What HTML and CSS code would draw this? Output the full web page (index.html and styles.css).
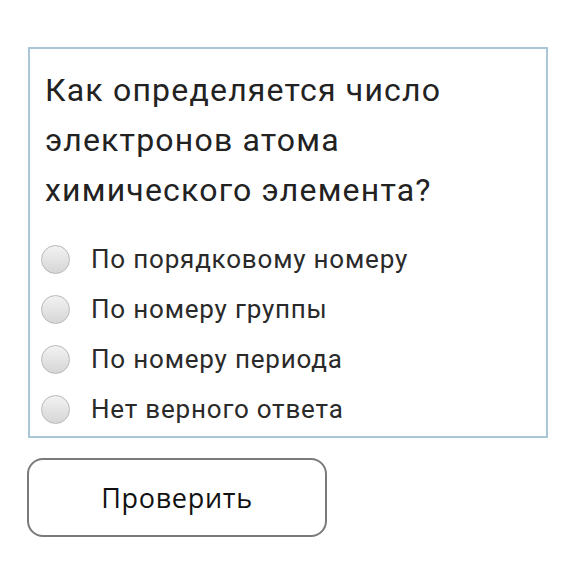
FILE: index.html
```html
<!DOCTYPE html>
<html>
<head>
  <meta charset="utf-8">
  <title>Тест</title>
  <link rel="stylesheet" href="styles.css">
</head>
<body>
  <div class="quiz">
    <div class="question">Как определяется число<br>электронов атома<br>химического элемента?</div>
    <label class="option"><span class="radio"></span>По порядковому номеру</label>
    <label class="option"><span class="radio"></span>По номеру группы</label>
    <label class="option"><span class="radio"></span>По номеру периода</label>
    <label class="option"><span class="radio"></span>Нет верного ответа</label>
  </div>
  <button class="check-btn">Проверить</button>
</body>
</html>
```

FILE: styles.css
```css
body {
  margin: 0;
  padding: 47px 0 0 28px;
  background: #fff;
  font-family: Roboto, "Liberation Sans", sans-serif;
  color: #222;
}

.quiz {
  width: 520px;
  box-sizing: border-box;
  border: 2px solid #a9c7d7;
  padding: 16px 15px 2px 11px;
}

.question {
  font-size: 32px;
  letter-spacing: 1.2px;
  line-height: 50px;
  padding-left: 4px;
  margin-bottom: 19px;
}

.option {
  display: flex;
  align-items: center;
  height: 50px;
  font-size: 26px;
  letter-spacing: 0.8px;
  color: #2a2a2a;
}

.radio {
  width: 29px;
  height: 29px;
  border-radius: 50%;
  box-sizing: border-box;
  border: 1px solid #b8b8b8;
  background: linear-gradient(#f2f2f2, #d6d6d6);
  margin-right: 21px;
  flex-shrink: 0;
}

.check-btn {
  display: block;
  margin-top: 20px;
  margin-left: -1px;
  width: 300px;
  height: 79px;
  border: 2px solid #7a7a7a;
  border-radius: 16px;
  background: #fff;
  font-family: "Open Sans", sans-serif;
  font-size: 27px;
  letter-spacing: 0.7px;
  color: #111;
}
```
